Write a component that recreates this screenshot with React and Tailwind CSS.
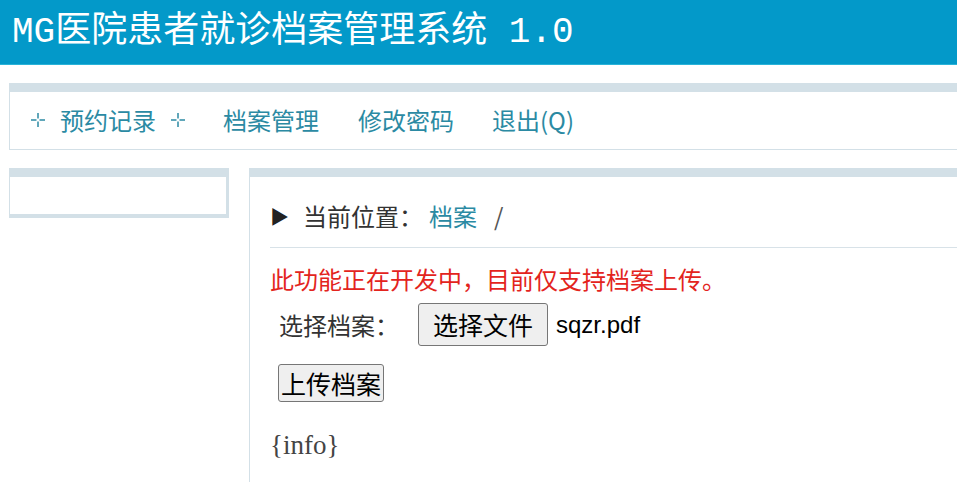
import React from "react";

const cjk = { fontFamily: '"Noto Sans CJK SC", sans-serif' };

function Plus() {
  return (
    <svg width="14" height="14" viewBox="0 0 14 14" className="block">
      <g stroke="#2b8aa3" strokeWidth="1.5">
        <line x1="7" y1="0" x2="7" y2="5.5" />
        <line x1="7" y1="8.5" x2="7" y2="14" />
        <line x1="0" y1="7" x2="5.5" y2="7" />
        <line x1="8.5" y1="7" x2="14" y2="7" />
      </g>
    </svg>
  );
}

export default function App() {
  return (
    <div className="min-h-screen bg-white overflow-hidden" style={cjk}>
      <div
        className="h-[65px] bg-[#0399c9] flex items-center pl-[12px] pt-[2px] text-white text-[36px] leading-none whitespace-nowrap border-b border-[#2ab3d8]"
        style={{ fontFamily: '"Liberation Mono", "Noto Sans CJK SC", monospace' }}
      >
        MG医院患者就诊档案管理系统 1.0
      </div>

      <div className="mt-[18px] ml-[9px] border-t-[9px] border-l border-b border-[#d3e0e7] h-[67px] flex items-center pl-[21px] pb-[2px] text-[24px] text-[#2b8aa3] whitespace-nowrap">
        <Plus />
        <span className="ml-[15px]">预约记录</span>
        <span className="ml-[15px]"><Plus /></span>
        <span className="ml-[38px]">档案管理</span>
        <span className="ml-[39px]">修改密码</span>
        <span className="ml-[38px]">退出(Q)</span>
      </div>

      <div className="mt-[18px] flex">
        <div className="ml-[9px] w-[220px] h-[50px] border-t-[9px] border-l border-r-[3px] border-b-[4px] border-[#d3e0e7] shrink-0" />
        <div className="ml-[20px] flex-1 border-t-[9px] border-l border-[#d3e0e7] min-h-[320px] pl-[20px]">
          <div className="h-[71px] pt-[7px] flex items-center text-[24px] text-[#333] whitespace-nowrap border-b border-[#d8e2e8]">
            <span className="text-[19px] text-[#222] mr-[14px] leading-none">▶</span>
            <span>当前位置：</span>
            <span className="ml-[6px] text-[#2b8aa3]">档案</span>
            <span className="ml-[17px] text-[#555]">/</span>
          </div>
          <div className="mt-[15px] text-[24px] leading-[32px] text-[#e3241d] whitespace-nowrap">
            此功能正在开发中，目前仅支持档案上传。
          </div>
          <div className="mt-[8px] flex items-center ml-[9px] h-[43px] whitespace-nowrap">
            <span className="text-[24px] text-[#333] w-[139px]">选择档案：</span>
            <button className="h-[43px] px-[14px] bg-[#efefef] border border-[#767676] rounded-[3px] text-[25px] text-black leading-none">
              选择文件
            </button>
            <span className="ml-[8px] text-[24px] text-black" style={{ fontFamily: '"Liberation Sans", sans-serif' }}>sqzr.pdf</span>
          </div>
          <div className="mt-[18px] ml-[8px]">
            <button className="h-[38px] px-[2px] bg-[#efefef] border border-[#767676] rounded-[3px] text-[25px] text-black leading-none">
              上传档案
            </button>
          </div>
          <div className="mt-[30px] text-[27px] leading-none text-[#444]" style={{ fontFamily: '"Liberation Serif", serif' }}>
            {"{info}"}
          </div>
        </div>
      </div>
    </div>
  );
}
